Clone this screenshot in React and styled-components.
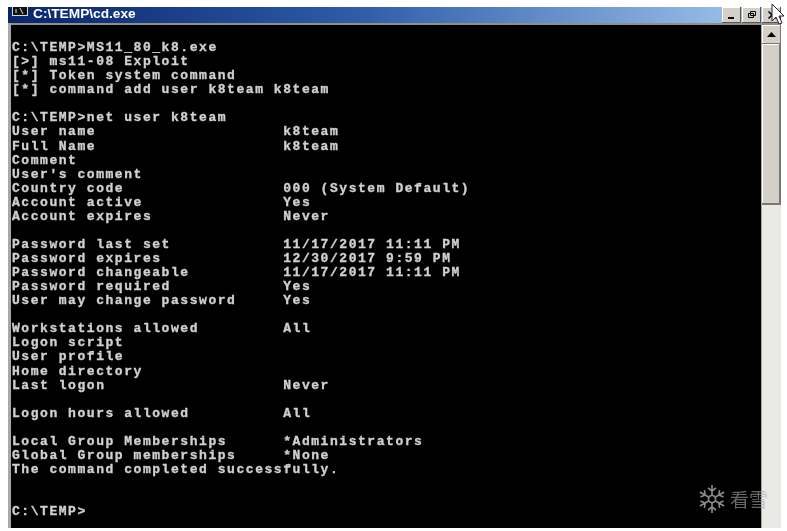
import React from 'react';
import styled, { createGlobalStyle } from 'styled-components';

const lines = [
  '',
  'C:\\TEMP>MS11_80_k8.exe',
  '[>] ms11-08 Exploit',
  '[*] Token system command',
  '[*] command add user k8team k8team',
  '',
  'C:\\TEMP>net user k8team',
  'User name                    k8team',
  'Full Name                    k8team',
  'Comment',
  "User's comment",
  'Country code                 000 (System Default)',
  'Account active               Yes',
  'Account expires              Never',
  '',
  'Password last set            11/17/2017 11:11 PM',
  'Password expires             12/30/2017 9:59 PM',
  'Password changeable          11/17/2017 11:11 PM',
  'Password required            Yes',
  'User may change password     Yes',
  '',
  'Workstations allowed         All',
  'Logon script',
  'User profile',
  'Home directory',
  'Last logon                   Never',
  '',
  'Logon hours allowed          All',
  '',
  'Local Group Memberships      *Administrators',
  'Global Group memberships     *None',
  'The command completed successfully.',
  '',
  '',
  'C:\\TEMP>',
];

const GlobalStyle = createGlobalStyle`
  html, body {
    margin: 0;
    background: #fff;
  }
`;

const Page = styled.div`
  position: relative;
  width: 787px;
  height: 531px;
  overflow: hidden;
  background: #fff;
  padding: 7px 6px 3px 8px;
  box-sizing: border-box;
`;

const Win = styled.div`
  height: 100%;
  display: flex;
  flex-direction: column;
  background: #a8a8a4;
  filter: blur(0.5px);
`;

const TitleBar = styled.div`
  height: 16px;
  display: flex;
  align-items: flex-start;
  padding-left: 4px;
  background: linear-gradient(90deg, #0a246a 0%, #2d5ca8 45%, #a6caf0 100%);
  flex-shrink: 0;
  overflow: hidden;
`;

const TitleIcon = styled.svg`
  margin-right: 5px;
  flex-shrink: 0;
`;

const TitleText = styled.span`
  font: bold 13.7px/14px "Liberation Sans", sans-serif;
  color: #fff;
  flex: 1;
`;

const WinBtn = styled.div`
  width: 19px;
  height: 16px;
  margin-left: 1px;
  background: #d4d0c8;
  box-shadow: inset -1px -1px #555, inset 1px 1px #fff;
  display: flex;
  align-items: center;
  justify-content: center;
`;

const Body = styled.div`
  flex: 1;
  display: flex;
  min-height: 0;
  margin-left: 3px;
  border-top: 2px solid #8f8f8b;
`;

const Screen = styled.pre`
  flex: 1;
  margin: 0;
  padding: 2px 0 0 1px;
  background: #000;
  color: #d0d0d0;
  font: bold 13px/14.07px "Liberation Mono", monospace;
  letter-spacing: 1.55px;
  -webkit-text-stroke: 0.35px #d0d0d0;
  overflow: hidden;
`;

const Row = styled.div`
  height: 14.07px;
`;

const ScrollBar = styled.div`
  width: 19px;
  margin-left: 1px;
  display: flex;
  flex-direction: column;
  flex-shrink: 0;
  background: #e9e9e5;
`;

const ArrowBtn = styled.div`
  height: 19px;
  background: #d4d0c8;
  box-shadow: inset -1px -1px #777, inset 1px 1px #fff;
  display: flex;
  align-items: center;
  justify-content: center;
`;

const Thumb = styled.div`
  height: 161px;
  background: #d4d0c8;
  box-shadow: inset -2px -2px #777, inset 1px 1px #fff;
`;

const Watermark = styled.div`
  position: absolute;
  left: 697px;
  top: 484px;
  display: flex;
  align-items: center;
  gap: 3px;
  color: rgba(170, 170, 170, 0.6);
  font: 19px/30px "Noto Sans CJK SC", sans-serif;
  filter: blur(0.6px);
`;

const Cursor = styled.svg`
  position: absolute;
  left: 771px;
  top: 3px;
`;

const Snowflake = () => (
  <svg width="30" height="30" viewBox="-15 -15 30 30" stroke="#8c8c8c" strokeWidth="1.6" fill="none">
    {[0, 60, 120, 180, 240, 300].map((a) => (
      <g key={a} transform={`rotate(${a})`}>
        <path d="M0 -4V-14M-4 -11L0 -8L4 -11" />
        <path d="M0 -4L3.5 -2" />
      </g>
    ))}
  </svg>
);

export default function App() {
  return (
    <Page>
      <GlobalStyle />
      <Win>
        <TitleBar>
          <TitleIcon width="16" height="9" viewBox="0 0 16 9">
            <rect width="16" height="9" fill="#d8d8d8" />
            <rect x="1" y="0" width="14" height="8" fill="#111" />
            <path d="M3 3h2M3 5h2M8 1l3 6" stroke="#ddd" />
          </TitleIcon>
          <TitleText>C:\TEMP\cd.exe</TitleText>
          <WinBtn>
            <svg width="10" height="10"><rect x="1" y="7" width="6" height="2" fill="#000" /></svg>
          </WinBtn>
          <WinBtn>
            <svg width="10" height="10" fill="none" stroke="#000"><path d="M3.5 1.5h5v4h-5zM1.5 3.5h5v4h-5z" /></svg>
          </WinBtn>
          <WinBtn>
            <svg width="10" height="10" stroke="#000" strokeWidth="1.5"><path d="M1.5 1.5l7 7M8.5 1.5l-7 7" /></svg>
          </WinBtn>
        </TitleBar>
        <Body>
          <Screen>
            {lines.map((l, i) => (
              <Row key={i}>{l}</Row>
            ))}
          </Screen>
          <ScrollBar>
            <ArrowBtn>
              <svg width="9" height="5"><path d="M4.5 0L9 5H0z" fill="#000" /></svg>
            </ArrowBtn>
            <Thumb />
          </ScrollBar>
        </Body>
      </Win>
      <Watermark>
        <Snowflake />
        <span>看雪</span>
      </Watermark>
      <Cursor width="15" height="24" viewBox="0 0 15 24">
        <path d="M1 1V18L5 14L8 21L11 20L8 13H13Z" fill="#fff" stroke="#222" strokeWidth="1" />
      </Cursor>
    </Page>
  );
}
